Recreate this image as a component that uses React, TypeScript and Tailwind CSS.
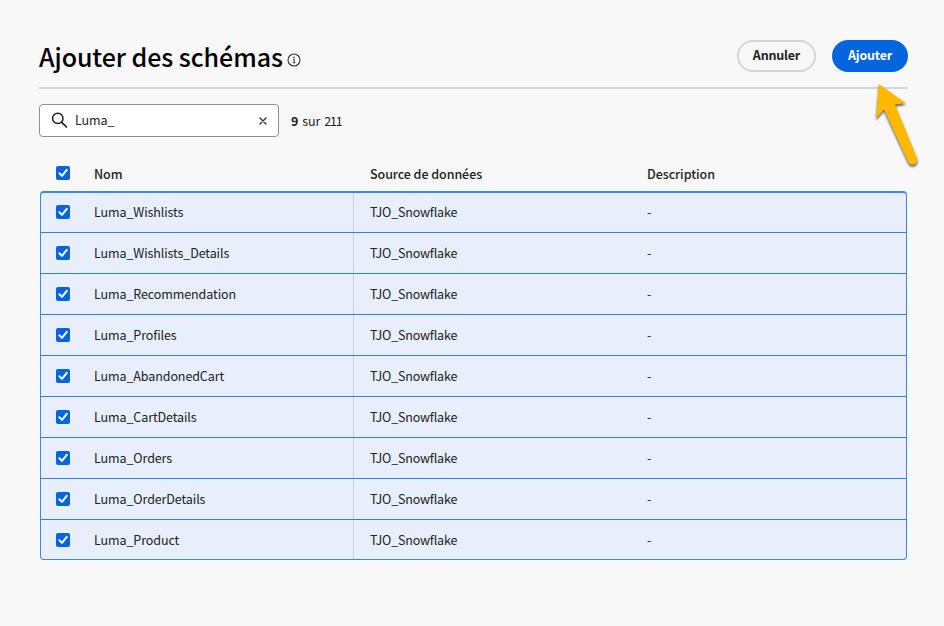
import React from "react";

const rows = [
  "Luma_Wishlists",
  "Luma_Wishlists_Details",
  "Luma_Recommendation",
  "Luma_Profiles",
  "Luma_AbandonedCart",
  "Luma_CartDetails",
  "Luma_Orders",
  "Luma_OrderDetails",
  "Luma_Product",
];

function Checkbox() {
  return (
    <span className="flex h-[14px] w-[14px] items-center justify-center rounded-[2px] bg-[#0265dc]">
      <svg width="14" height="14" viewBox="0 0 14 14" fill="none">
        <path d="M3.4 7.3 L6 9.9 L10.8 3.9" stroke="#fff" strokeWidth="2" strokeLinecap="round" strokeLinejoin="round" />
      </svg>
    </span>
  );
}

export default function App() {
  return (
    <div className="relative h-[626px] w-[944px] overflow-hidden bg-[#f8f8f8] pl-[39px] pr-9 pt-10 font-['Noto_Sans_CJK_SC','Source_Sans_Pro',sans-serif] text-[12.5px] leading-5 tracking-[-0.1px] text-[#222]">
      <header className="flex h-[49px] items-start justify-between border-b-2 border-[#d5d5d5]">
        <div className="flex items-start">
          <h1 className="-mt-[2px] whitespace-nowrap text-[25px] font-medium leading-9 tracking-[-0.07px] text-black">Ajouter des schémas</h1>
          <svg className="ml-[4px] mt-[13px]" width="14" height="14" viewBox="0 0 14 14" fill="none">
            <circle cx="7" cy="7" r="6" stroke="#333" strokeWidth="1.1" />
            <circle cx="7" cy="4.3" r="0.8" fill="#333" />
            <path d="M6 6.4H7.2V9.7M5.8 9.7H8.4" stroke="#333" strokeWidth="1" />
          </svg>
        </div>
        <div className="flex gap-4">
          <button className="flex h-8 w-[79px] items-center justify-center rounded-full border-2 border-[#d5d5d5] pb-[2px] font-bold tracking-[-0.2px]">
            <span>Annuler</span>
          </button>
          <button className="flex h-8 w-[76px] items-center justify-center rounded-full bg-[#0265dc] pb-[2px] font-bold tracking-[-0.2px] text-white">
            <span>Ajouter</span>
          </button>
        </div>
      </header>

      <div className="mt-[15px] flex h-[33px] items-center">
        <div className="flex h-[33px] w-[240px] items-center rounded-[4px] border border-[#8f8f8f] bg-white pl-[11px] pr-[10px]">
          <svg width="17" height="17" viewBox="0 0 17 17" fill="none" stroke="#222" strokeLinecap="round">
            <circle cx="6.8" cy="6.4" r="5.2" strokeWidth="1.5" />
            <path d="M10.7 10.3L15.5 15" strokeWidth="1.7" />
          </svg>
          <span className="-mt-px ml-[7px] flex-1">Luma_</span>
          <svg width="10" height="10" viewBox="0 0 10 10" stroke="#333" strokeWidth="1.4" strokeLinecap="round">
            <path d="M2 2L8 8M8 2L2 8" />
          </svg>
        </div>
        <p className="ml-3 flex whitespace-nowrap">
          <b>9</b>
          <span className="ml-1">sur</span>
          <span className="ml-1 tracking-[-1.2px]">211</span>
        </p>
      </div>

      <div className="mt-[22px] flex h-8 items-start font-medium">
        <div className="ml-[17px] mt-[7px] w-[38px]">
          <Checkbox />
        </div>
        <div className="mt-[5px] w-[276px] tracking-[-0.06px]"><span>Nom</span></div>
        <div className="mt-[5px] w-[277px] tracking-[-0.06px]"><span>Source de données</span></div>
        <div className="mt-[5px] tracking-[-0.06px]"><span>Description</span></div>
      </div>

      <div className="ml-px w-[867px] overflow-hidden rounded-[4px] border border-t-2 border-[#3a88e6] bg-[#e7eefc]">
        {rows.map((name) => (
          <div key={name} className="flex h-[41px] border-b border-[#2f80e4] first:h-[40px] first:*:pb-px last:h-[39px] last:border-b-0">
            <div className="flex w-[312px] items-center pl-[15px]">
              <div className="w-[38px] shrink-0"><Checkbox /></div>
              <span>{name}</span>
            </div>
            <div className="flex w-[277px] items-center border-l border-[#c9d0df] pl-4"><span className="tracking-[-0.18px]">TJO_Snowflake</span></div>
            <div className="flex items-center pl-[17px]"><span>-</span></div>
          </div>
        ))}
      </div>

      <svg className="absolute left-[866px] top-[78px]" width="64" height="96" viewBox="0 0 64 96">
        <path
          d="M12.8 6 L40 25 L29 26.6 L51.4 80.8 A5 5 0 0 1 42.6 84.8 L18 31.4 L10 40.5 Z"
          fill="#fcb900"
          style={{ filter: "drop-shadow(0.5px 2px 1.2px rgba(0,0,0,.6))" }}
        />
      </svg>
    </div>
  );
}
